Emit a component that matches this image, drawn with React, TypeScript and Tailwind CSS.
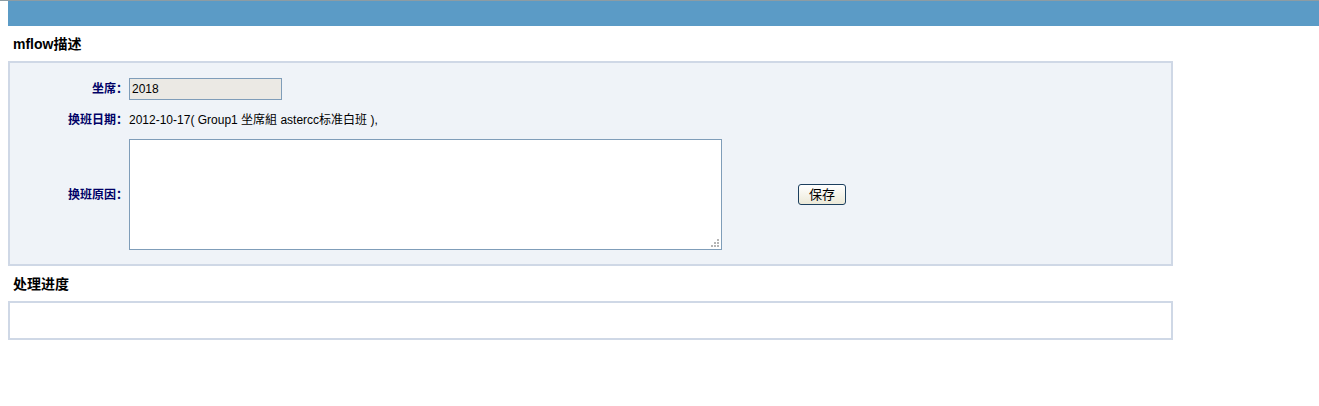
export default function App() {
  const label = "w-[119px] shrink-0 pr-[1px] text-right text-[12px] font-bold text-[#000066]";
  return (
    <div className="min-h-[406px] w-full bg-white font-['Liberation_Sans','Noto_Sans_CJK_SC',sans-serif] text-[12px] text-black">
      <div className="h-px w-full bg-[#8d9ca3]" />
      <div className="ml-[8px] h-[25px] bg-[#5b9bc6]" />

      <div className="flex h-[35px] items-center pl-[13px] pt-[2px] text-[14px] font-bold">mflow描述</div>

      <div className="ml-[8px] w-[1165px] border-2 border-[#cfd8e6] bg-[#eff3f8] pt-[15px] pb-[14px]">
        <div className="flex h-[22px] items-center">
          <div className={label}>坐席：</div>
          <input
            readOnly
            value="2018"
            className="h-[22px] w-[153px] border border-[#7f9db9] bg-[#ebe9e4] px-[2px] text-[12px] outline-none"
          />
        </div>
        <div className="flex h-[39px] items-center">
          <div className={label}>换班日期：</div>
          <span>2012-10-17( Group1 坐席組 astercc标准白班 ),</span>
        </div>
        <div className="flex items-center">
          <div className={label}>换班原因：</div>
          <div className="relative">
            <textarea className="block h-[111px] w-[593px] resize-none border border-[#7f9db9] bg-white outline-none" />
            <svg className="absolute right-[2px] bottom-[2px]" width="10" height="10" viewBox="0 0 10 10">
              <g fill="#b5b5b5">
                <rect x="7" y="1" width="2" height="2" />
                <rect x="4" y="4" width="2" height="2" />
                <rect x="7" y="4" width="2" height="2" />
                <rect x="1" y="7" width="2" height="2" />
                <rect x="4" y="7" width="2" height="2" />
                <rect x="7" y="7" width="2" height="2" />
              </g>
            </svg>
          </div>
          <button className="ml-[76px] h-[21px] w-[48px] rounded-[3px] border border-[#1c3f5e] bg-gradient-to-b from-white to-[#ece9d8] text-[13px] leading-none">
            保存
          </button>
        </div>
      </div>

      <div className="flex h-[35px] items-center pl-[13px] pt-[2px] text-[14px] font-bold">处理进度</div>

      <div className="ml-[8px] h-[39px] w-[1165px] border-2 border-[#cfd8e6] bg-white" />
    </div>
  );
}
